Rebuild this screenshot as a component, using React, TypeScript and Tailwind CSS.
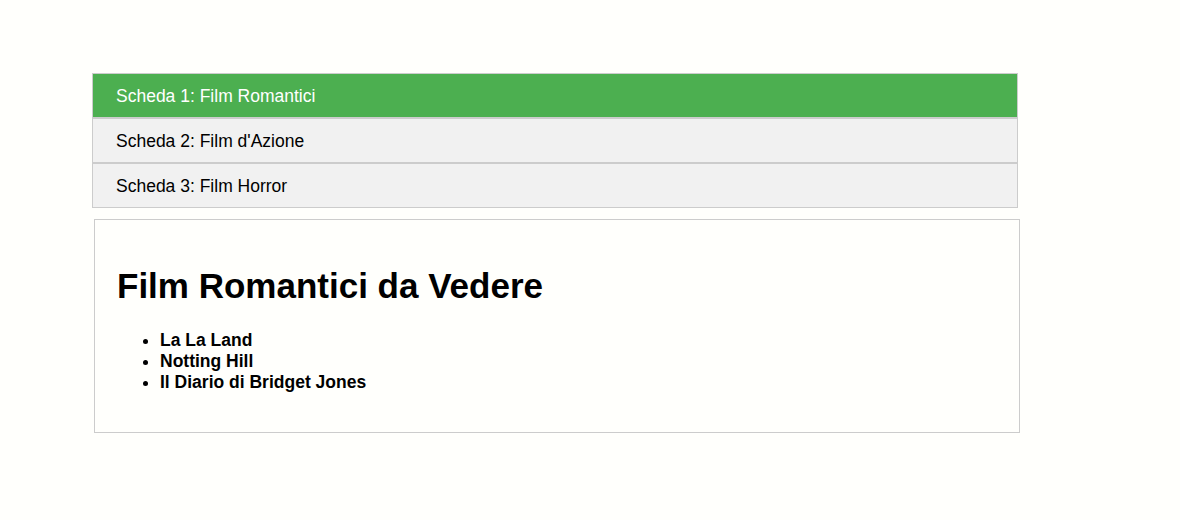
import { useState } from "react";

const tabs = [
  {
    label: "Scheda 1: Film Romantici",
    title: "Film Romantici da Vedere",
    films: ["La La Land", "Notting Hill", "Il Diario di Bridget Jones"],
  },
  {
    label: "Scheda 2: Film d'Azione",
    title: "Film d'Azione da Vedere",
    films: ["Mad Max: Fury Road", "John Wick", "Die Hard"],
  },
  {
    label: "Scheda 3: Film Horror",
    title: "Film Horror da Vedere",
    films: ["Shining", "L'Esorcista", "Hereditary"],
  },
];

export default function App() {
  const [active, setActive] = useState(0);
  const tab = tabs[active];

  return (
    <div
      className="min-h-[520px] w-full bg-[#fffffc] pt-[73px] text-[17.5px] text-black"
      style={{ fontFamily: '"Liberation Sans", Arial, sans-serif' }}
    >
      <div className="ml-[92px] flex w-[926px] flex-col border border-[#cccccc]">
        {tabs.map((t, idx) => (
          <button
            key={idx}
            onClick={() => setActive(idx)}
            className={`h-[45px] border-b-2 border-[#cccccc] px-[23px] text-left leading-[20px] last:h-[43px] last:border-b-0 ${
              active === idx
                ? "bg-[#4caf50] text-white"
                : "bg-[#f1f1f1] text-black hover:bg-[#dddddd]"
            }`}
          >
            {t.label}
          </button>
        ))}
      </div>

      <div className="mt-[11px] ml-[94px] w-[926px] border border-[#cccccc] px-[22px] pt-[46px] pb-[39px]">
        <h1 className="text-[35px] leading-[40px] font-bold">{tab.title}</h1>
        <ul className="mt-[24px] list-disc pl-[43px] leading-[21px] font-bold">
          {tab.films.map((f) => (
            <li key={f}>{f}</li>
          ))}
        </ul>
      </div>
    </div>
  );
}
